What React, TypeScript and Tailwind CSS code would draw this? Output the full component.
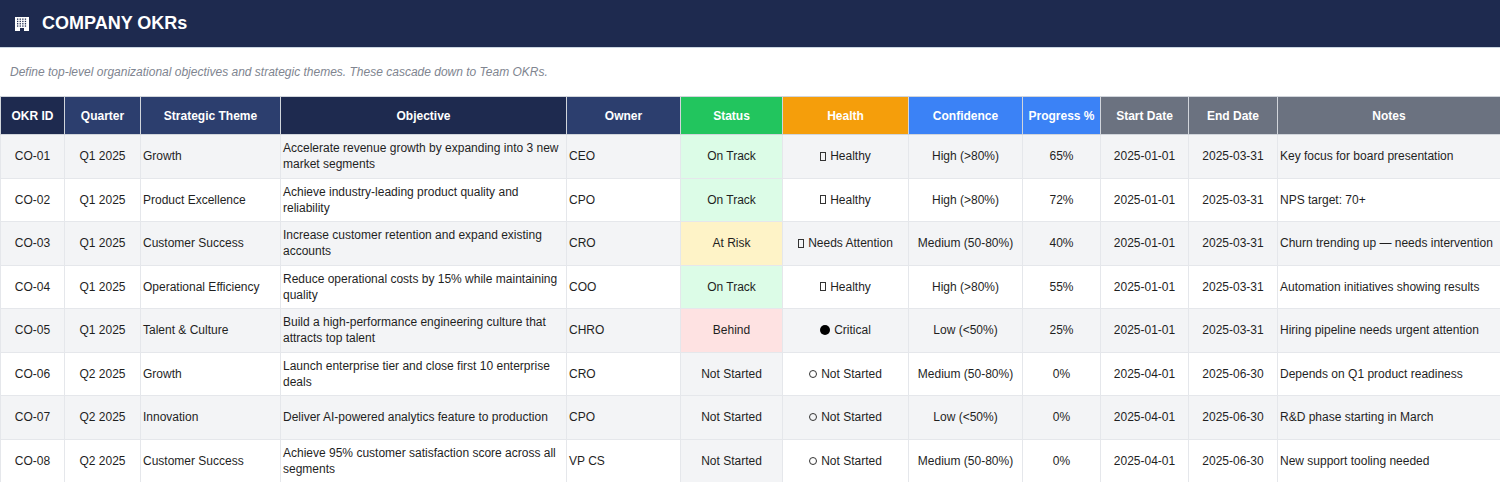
import React from "react";

const cols = [
  { h: "OKR ID", w: 64, bg: "bg-[#1e2a4f]" },
  { h: "Quarter", w: 76, bg: "bg-[#2c3e6e]" },
  { h: "Strategic Theme", w: 140, bg: "bg-[#2c3e6e]" },
  { h: "Objective", w: 286, bg: "bg-[#1e2a4f]" },
  { h: "Owner", w: 114, bg: "bg-[#2c3e6e]" },
  { h: "Status", w: 102, bg: "bg-[#22c55e]" },
  { h: "Health", w: 126, bg: "bg-[#f59e0b]" },
  { h: "Confidence", w: 114, bg: "bg-[#3b82f6]" },
  { h: "Progress %", w: 78, bg: "bg-[#3b82f6]" },
  { h: "Start Date", w: 88, bg: "bg-[#6b7280]" },
  { h: "End Date", w: 89, bg: "bg-[#6b7280]" },
  { h: "Notes", w: 223, bg: "bg-[#6b7280]" },
];

type R = [string, string, string, string, string, string, string, string, string, string, string, string];
const rows: R[] = [
  ["CO-01", "Q1 2025", "Growth", "Accelerate revenue growth by expanding into 3 new market segments", "CEO", "On Track", "Healthy", "High (>80%)", "65%", "2025-01-01", "2025-03-31", "Key focus for board presentation"],
  ["CO-02", "Q1 2025", "Product Excellence", "Achieve industry-leading product quality and reliability", "CPO", "On Track", "Healthy", "High (>80%)", "72%", "2025-01-01", "2025-03-31", "NPS target: 70+"],
  ["CO-03", "Q1 2025", "Customer Success", "Increase customer retention and expand existing accounts", "CRO", "At Risk", "Needs Attention", "Medium (50-80%)", "40%", "2025-01-01", "2025-03-31", "Churn trending up — needs intervention"],
  ["CO-04", "Q1 2025", "Operational Efficiency", "Reduce operational costs by 15% while maintaining quality", "COO", "On Track", "Healthy", "High (>80%)", "55%", "2025-01-01", "2025-03-31", "Automation initiatives showing results"],
  ["CO-05", "Q1 2025", "Talent & Culture", "Build a high-performance engineering culture that attracts top talent", "CHRO", "Behind", "Critical", "Low (<50%)", "25%", "2025-01-01", "2025-03-31", "Hiring pipeline needs urgent attention"],
  ["CO-06", "Q2 2025", "Growth", "Launch enterprise tier and close first 10 enterprise deals", "CRO", "Not Started", "Not Started", "Medium (50-80%)", "0%", "2025-04-01", "2025-06-30", "Depends on Q1 product readiness"],
  ["CO-07", "Q2 2025", "Innovation", "Deliver AI-powered analytics feature to production", "CPO", "Not Started", "Not Started", "Low (<50%)", "0%", "2025-04-01", "2025-06-30", "R&D phase starting in March"],
  ["CO-08", "Q2 2025", "Customer Success", "Achieve 95% customer satisfaction score across all segments", "VP CS", "Not Started", "Not Started", "Medium (50-80%)", "0%", "2025-04-01", "2025-06-30", "New support tooling needed"],
];

const statusBg: Record<string, string> = {
  "On Track": "bg-[#dcfce7]",
  "At Risk": "bg-[#fef3c7]",
  Behind: "bg-[#fee2e2]",
  "Not Started": "bg-[#f3f4f6]",
};

function Health({ v }: { v: string }) {
  let icon: React.ReactNode;
  if (v === "Critical") icon = <span className="inline-block w-[10px] h-[10px] rounded-full bg-black" />;
  else if (v === "Not Started") icon = <span className="inline-block w-[8px] h-[8px] rounded-full border border-[#333]" />;
  else icon = <span className="inline-block w-[6px] h-[9px] border border-[#333]" />;
  return (
    <span className="inline-flex items-center gap-[4px]">
      {icon}
      {v}
    </span>
  );
}

export default function App() {
  return (
    <div className="w-[1500px] h-[482px] overflow-hidden bg-white text-[12px] text-[#1f1f1f]" style={{ fontFamily: '"Liberation Sans", Arial, sans-serif' }}>
      <div className="h-[48px] bg-[#1e2a4f] flex items-center px-[14px] gap-[12px] border-b border-[#cbd5e1]">
        <svg width="16" height="16" viewBox="0 0 16 16">
          <rect x="1" y="1" width="14" height="14" fill="#fff" />
          {[0, 1, 2, 3].map((r) =>
            [0, 1, 2, 3].map((c) => (
              <rect key={r + "-" + c} x={3 + c * 2.6} y={2.5 + r * 2.3} width="1.3" height="1.3" fill="#1e2a4f" />
            ))
          )}
          <rect x="6" y="12" width="4" height="3" fill="#1e2a4f" />
        </svg>
        <span className="text-white font-bold text-[18px]">COMPANY OKRs</span>
      </div>
      <div className="h-[48px] flex items-center px-[10px] italic text-[#808590] text-[12px]">
        Define top-level organizational objectives and strategic themes. These cascade down to Team OKRs.
      </div>
      <table className="border-collapse table-fixed w-[1500px]">
        <colgroup>
          {cols.map((c) => (
            <col key={c.h} style={{ width: c.w }} />
          ))}
        </colgroup>
        <thead>
          <tr className="h-[38px]">
            {cols.map((c) => (
              <th key={c.h} className={`${c.bg} text-white font-bold text-[12px] border border-[#d1d5db] text-center`}>
                {c.h}
              </th>
            ))}
          </tr>
        </thead>
        <tbody>
          {rows.map((r, i) => {
            const rb = i % 2 === 0 ? "bg-[#f3f4f6]" : "bg-white";
            return (
              <tr key={r[0]} className="h-[43.5px]">
                {r.map((v, j) => {
                  const left = j === 2 || j === 3 || j === 4 || j === 11;
                  const bg = j === 5 ? statusBg[v] : rb;
                  return (
                    <td
                      key={j}
                      className={`${bg} border border-[#e5e7eb] px-[2px] leading-[16px] ${left ? "text-left" : "text-center"}`}
                    >
                      {j === 6 ? <Health v={v} /> : v}
                    </td>
                  );
                })}
              </tr>
            );
          })}
        </tbody>
      </table>
    </div>
  );
}
